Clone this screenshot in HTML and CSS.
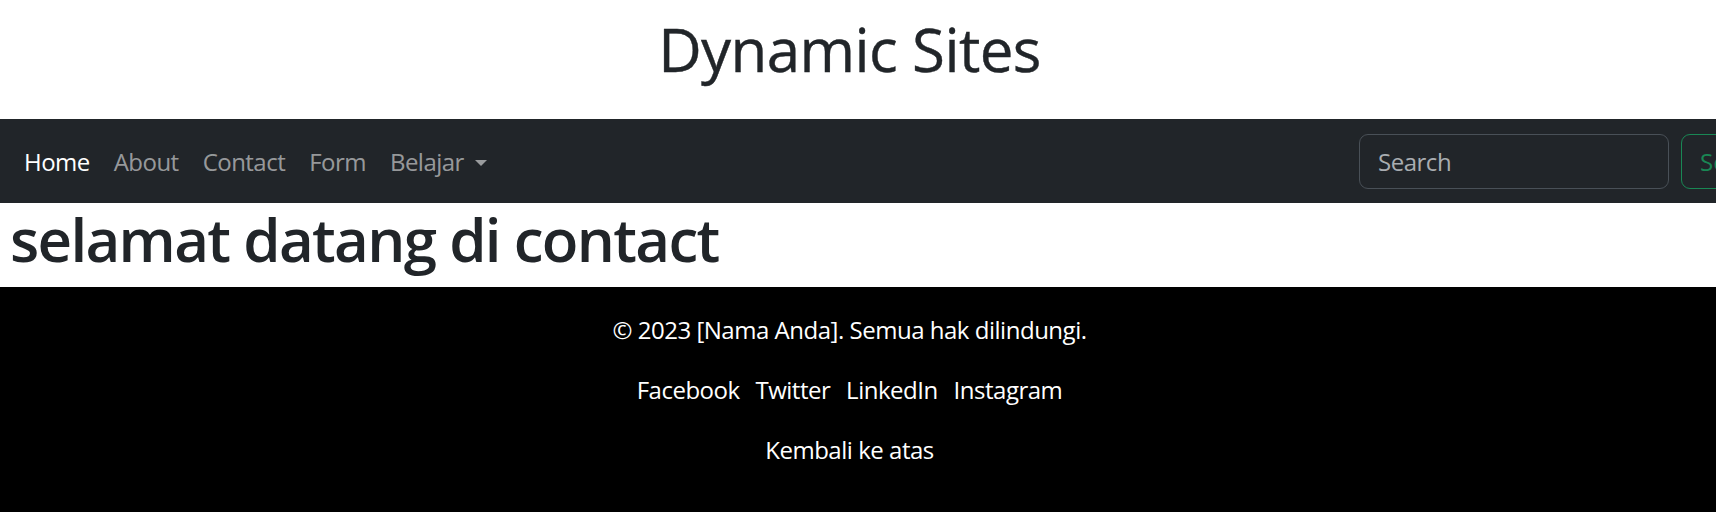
FILE: index.html
```html
<!DOCTYPE html>
<html lang="id">
<head>
<meta charset="utf-8">
<title>Dynamic Sites</title>
<link rel="stylesheet" href="styles.css">
</head>
<body>
<header class="site-header">
  <h1 class="site-title">Dynamic Sites</h1>
</header>
<nav class="navbar">
  <div class="navbar-inner">
    <ul class="nav-list">
      <li><a class="nav-link active" href="#">Home</a></li>
      <li><a class="nav-link" href="#">About</a></li>
      <li><a class="nav-link" href="#">Contact</a></li>
      <li><a class="nav-link" href="#">Form</a></li>
      <li><a class="nav-link dropdown-toggle" href="#">Belajar</a></li>
    </ul>
    <form class="search-form">
      <input class="search-input" type="search" placeholder="Search">
      <button class="search-btn" type="button">Search</button>
    </form>
  </div>
</nav>
<main class="content">
  <h1 class="page-title">selamat datang di contact</h1>
</main>
<footer class="site-footer">
  <p class="footer-line">© 2023 [Nama Anda]. Semua hak dilindungi.</p>
  <p class="footer-line"><a class="footer-link" href="#">Facebook</a> <a class="footer-link" href="#">Twitter</a> <a class="footer-link" href="#">LinkedIn</a> <a class="footer-link" href="#">Instagram</a></p>
  <p class="footer-line"><a class="footer-top" href="#">Kembali ke atas</a></p>
</footer>
</body>
</html>
```
FILE: styles.css
```css
* { box-sizing: border-box; }

html, body {
  margin: 0;
  padding: 0;
}

body {
  font-family: "Open Sans", "Noto Sans", sans-serif;
  font-size: 24px;
  line-height: 36px;
  color: #212529;
  background: #fff;
  overflow-x: hidden;
}

.site-header {
  padding: 13px 17px 34px 0;
  text-align: center;
}

.site-title {
  margin: 0;
  font-size: 60px;
  line-height: 72px;
  font-weight: 400;
  letter-spacing: -0.01em;
  -webkit-text-stroke: 0.4px #212529;
}

.navbar {
  background: #212529;
  height: 84px;
  overflow: hidden;
}

.navbar-inner {
  width: 1807px;
  height: 100%;
  display: flex;
  align-items: center;
  padding: 1px 12px 0;
}

.nav-list {
  list-style: none;
  margin: 0;
  padding: 0;
  display: flex;
  flex: 1;
}

.nav-link {
  display: block;
  padding: 0 12px;
  color: rgba(255, 255, 255, 0.55);
  text-decoration: none;
  letter-spacing: -0.022em;
}

.nav-link.active {
  color: #fff;
}

.dropdown-toggle::after {
  content: "";
  display: inline-block;
  margin-left: 11px;
  vertical-align: 5px;
  border-top: 6px solid rgba(255, 255, 255, 0.55);
  border-left: 6.5px solid transparent;
  border-right: 6.5px solid transparent;
}

.search-form {
  display: flex;
  gap: 12px;
}

.search-input {
  width: 310px;
  height: 55px;
  padding: 0 18px;
  background: #212529;
  border: 1px solid #495057;
  border-radius: 9px;
  font-family: inherit;
  font-size: 24px;
  color: #dee2e6;
  letter-spacing: -0.02em;
}

.search-input::placeholder {
  color: #a9adb1;
}

.search-btn {
  height: 55px;
  padding: 0 18px;
  background: transparent;
  border: 1px solid #198754;
  border-radius: 9px;
  font-family: inherit;
  font-size: 24px;
  color: #198754;
}

.content {
  padding: 0 0 0 10px;
}

.page-title {
  margin: 0 0 12px;
  font-size: 60px;
  line-height: 72px;
  font-weight: 600;
  letter-spacing: -0.028em;
}

.site-footer {
  background: #000;
  color: #fff;
  text-align: center;
  padding: 25px 17px 24px 0;
}

.footer-line {
  margin: 0 0 24px;
  letter-spacing: -0.02em;
}

.footer-link,
.footer-top {
  color: #fff;
  text-decoration: none;
}

.footer-link {
  margin: 0 5px;
}
```
